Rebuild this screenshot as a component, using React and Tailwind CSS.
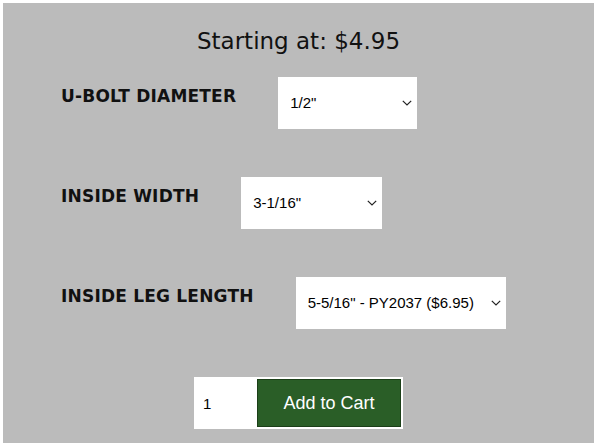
import React from 'react';

const options = [
    { label: 'U-BOLT DIAMETER', value: '1/2"', width: 'w-[139px]' },
    { label: 'INSIDE WIDTH', value: '3-1/16"', width: 'w-[141px]' },
    { label: 'INSIDE LEG LENGTH', value: '5-5/16" - PY2037 ($6.95)', width: 'w-[210px]' },
];

const Chevron = () => (
    <svg className="absolute right-[5px] top-1/2 -translate-y-1/2 pointer-events-none" width="10" height="6" viewBox="0 0 10 6" fill="none">
        <path d="M0.8 0.8 L5 5 L9.2 0.8" stroke="#222" strokeWidth="1.2" />
    </svg>
);

const App = () => {
    return (
        <div className="min-h-screen bg-white" style={{ height: 443 }}>
            <div className="ml-[3px] mt-[3px] w-[591px] h-[440px] bg-[#bbbbbb] text-[#111] overflow-hidden">
                <h1 className="pt-[27px] text-center text-[23px] leading-none font-['DejaVu_Sans',sans-serif]">
                    Starting at: $4.95
                </h1>

                <div className="mt-[24px] pl-[58px] flex flex-col gap-[48px]">
                    {options.map(o => (
                        <div key={o.label} className="flex items-start gap-[42px]">
                            <span className="mt-[11px] text-[17px] leading-none font-bold tracking-[0.2px] font-['DejaVu_Sans',sans-serif]">{o.label}</span>
                            <div className={`relative h-[52px] ${o.width}`}>
                                <select className="w-full h-full appearance-none bg-white pl-[12px] text-[15px] text-black font-['Liberation_Sans',Arial,sans-serif] outline-none" defaultValue={o.value}>
                                    <option value={o.value}>{o.value}</option>
                                </select>
                                <Chevron />
                            </div>
                        </div>
                    ))}
                </div>

                <div className="mt-[48px] flex justify-center">
                    <div className="flex bg-white p-[2px] pl-0">
                        <input
                            type="text"
                            defaultValue="1"
                            className="w-[63px] h-[48px] pl-[9px] text-[15px] text-black bg-white outline-none font-['Liberation_Sans',Arial,sans-serif]"
                        />
                        <button className="w-[144px] h-[48px] bg-[#2a5e27] border border-[#1b3f18] text-white text-[18px] font-['Liberation_Sans',Arial,sans-serif]">
                            Add to Cart
                        </button>
                    </div>
                </div>
            </div>
        </div>
    );
};

export default App;
